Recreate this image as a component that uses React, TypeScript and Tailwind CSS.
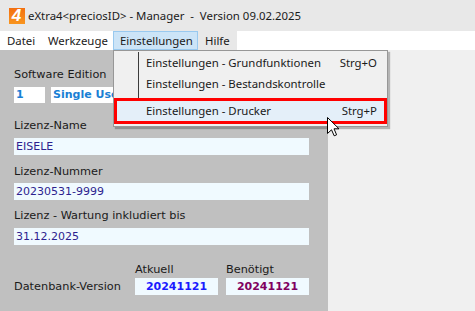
import React from 'react';

const label = "text-[11.3px] leading-[16px] text-[#1a1a1a] [font-family:'DejaVu_Sans',Tahoma,sans-serif]";
const field =
  "h-[17px] bg-[#f0faff] text-[11px] leading-[17px] pl-[2px] text-[#2e1f8f] [font-family:'DejaVu_Sans',Verdana,sans-serif]";

function Logo() {
  return (
    <div className="w-[16px] h-[16px] bg-gradient-to-b from-[#f36f10] to-[#f8951f] flex items-center justify-center overflow-hidden">
      <span className="text-white font-bold italic text-[17px] leading-none [font-family:'Liberation_Sans',Arial,sans-serif] -ml-[1px]">
        4
      </span>
    </div>
  );
}

function Cursor() {
  return (
    <svg width="13" height="20" viewBox="0 0 13 20" className="absolute left-[327px] top-[117px]">
      <path
        d="M0.5 0.5 L0.5 16.5 L4.5 12.8 L7.2 18.8 L9.6 17.8 L7 11.8 L12 11.8 Z"
        fill="#fff"
        stroke="#000"
        strokeWidth="1"
        strokeLinejoin="miter"
      />
    </svg>
  );
}

function DropMenu() {
  const font = "[font-family:'Noto_Sans','Segoe_UI',sans-serif] text-[11.4px] text-[#1a1a1a]";
  return (
    <div className={`absolute left-[113px] top-[50px] w-[275px] bg-[#f0f0f0] border border-[#979797] shadow-[2px_2px_1px_rgba(0,0,0,0.25)] ${font}`}>
      <div className="flex h-[22px] items-center">
        <div className="w-[24px] h-full" />
        <div className="flex h-full flex-1 items-center border-l border-[#3c3c3c] mt-[1px] pl-[7px] pr-[10px]">
          <span className="flex-1">Einstellungen - Grundfunktionen</span>
          <span>Strg+O</span>
        </div>
      </div>
      <div className="flex h-[22px] items-center">
        <div className="w-[24px] h-full" />
        <div className="flex h-full flex-1 items-center border-l border-[#3c3c3c] pl-[7px] pr-[10px]">
          <span className="flex-1">Einstellungen - Bestandskontrolle</span>
        </div>
      </div>
      <div className="flex h-[3px]">
        <div className="w-[24px]" />
        <div className="flex-1 border-l border-[#3c3c3c]" />
      </div>
      <div className="flex h-[26px] items-center border-[3px] border-[#ff0000] bg-[#e4eff9] pl-[29px] pr-[7px]">
        <span className="flex-1">Einstellungen - Drucker</span>
        <span>Strg+P</span>
      </div>
      <div className="h-[2px]" />
    </div>
  );
}

export default function App() {
  const menuFont = "[font-family:'Noto_Sans','Segoe_UI',sans-serif] text-[11.4px] text-[#1a1a1a]";
  return (
    <div className="relative w-[475px] h-[311px] overflow-hidden flex flex-col bg-[#f0f0f0]">
      {/* Titelleiste */}
      <div className="h-[31px] bg-[#e8e8e8] flex items-center pl-[9px] gap-[3px]">
        <Logo />
        <span className={menuFont}>eXtra4&lt;preciosID&gt; - Manager&nbsp; -&nbsp; Version 09.02.2025</span>
      </div>

      {/* Menü */}
      <div className={`h-[19px] bg-white flex items-center ${menuFont}`}>
        <div className="w-[41px] h-full pl-[7px] flex items-center">Datei</div>
        <div className="w-[72px] h-full pl-[7px] flex items-center">Werkzeuge</div>
        <div className="w-[85px] h-full pl-[6px] flex items-center bg-[#cce4f7] border border-[#99c9ef]">Einstellungen</div>
        <div className="w-[39px] h-full pl-[7px] flex items-center bg-[#e8e8e8]">Hilfe</div>
      </div>

      {/* Inhalt */}
      <div className="flex flex-1">
        <div className="w-[328px] bg-[#c0c0c0] pl-[14px] pr-[19px] flex flex-col">
          <div className={`${label} mt-[17px]`}>Software Edition</div>
          <div className="flex gap-[6px] mt-[4px]">
            <div className="w-[31px] h-[16px] bg-white text-[11px] leading-[16px] pl-[2px] font-bold text-[#1a7fd4] [font-family:'DejaVu_Sans',Verdana,sans-serif]">
              1
            </div>
            <div className="w-[130px] h-[16px] bg-white text-[11px] leading-[16px] pl-[2px] font-bold text-[#1a7fd4] [font-family:'DejaVu_Sans',Verdana,sans-serif]">
              Single User
            </div>
          </div>

          <div className={`${label} mt-[15px]`}>Lizenz-Name</div>
          <div className={`${field} mt-[4px]`}>EISELE</div>

          <div className={`${label} mt-[9px]`}>Lizenz-Nummer</div>
          <div className={`${field} mt-[3px]`}>20230531-9999</div>

          <div className={`${label} mt-[8px]`}>Lizenz - Wartung inkludiert bis</div>
          <div className={`${field} mt-[4px]`}>31.12.2025</div>

          <div className="grid grid-cols-[121px_83px_8px_83px] mt-[17px]">
            <div />
            <div className={label}>Atkuell</div>
            <div />
            <div className={label}>Benötigt</div>
            <div className={`${label} self-center`}>Datenbank-Version</div>
            <div className="h-[17px] bg-[#f0faff] text-center text-[11px] leading-[17px] font-bold text-[#1a1aff] [font-family:'DejaVu_Sans',Verdana,sans-serif]">
              20241121
            </div>
            <div />
            <div className="h-[17px] bg-[#f0faff] text-center text-[11px] leading-[17px] font-bold text-[#800060] [font-family:'DejaVu_Sans',Verdana,sans-serif]">
              20241121
            </div>
          </div>
        </div>
        <div className="flex-1 bg-[#f0f0f0]" />
      </div>

      <DropMenu />
      <Cursor />
    </div>
  );
}
